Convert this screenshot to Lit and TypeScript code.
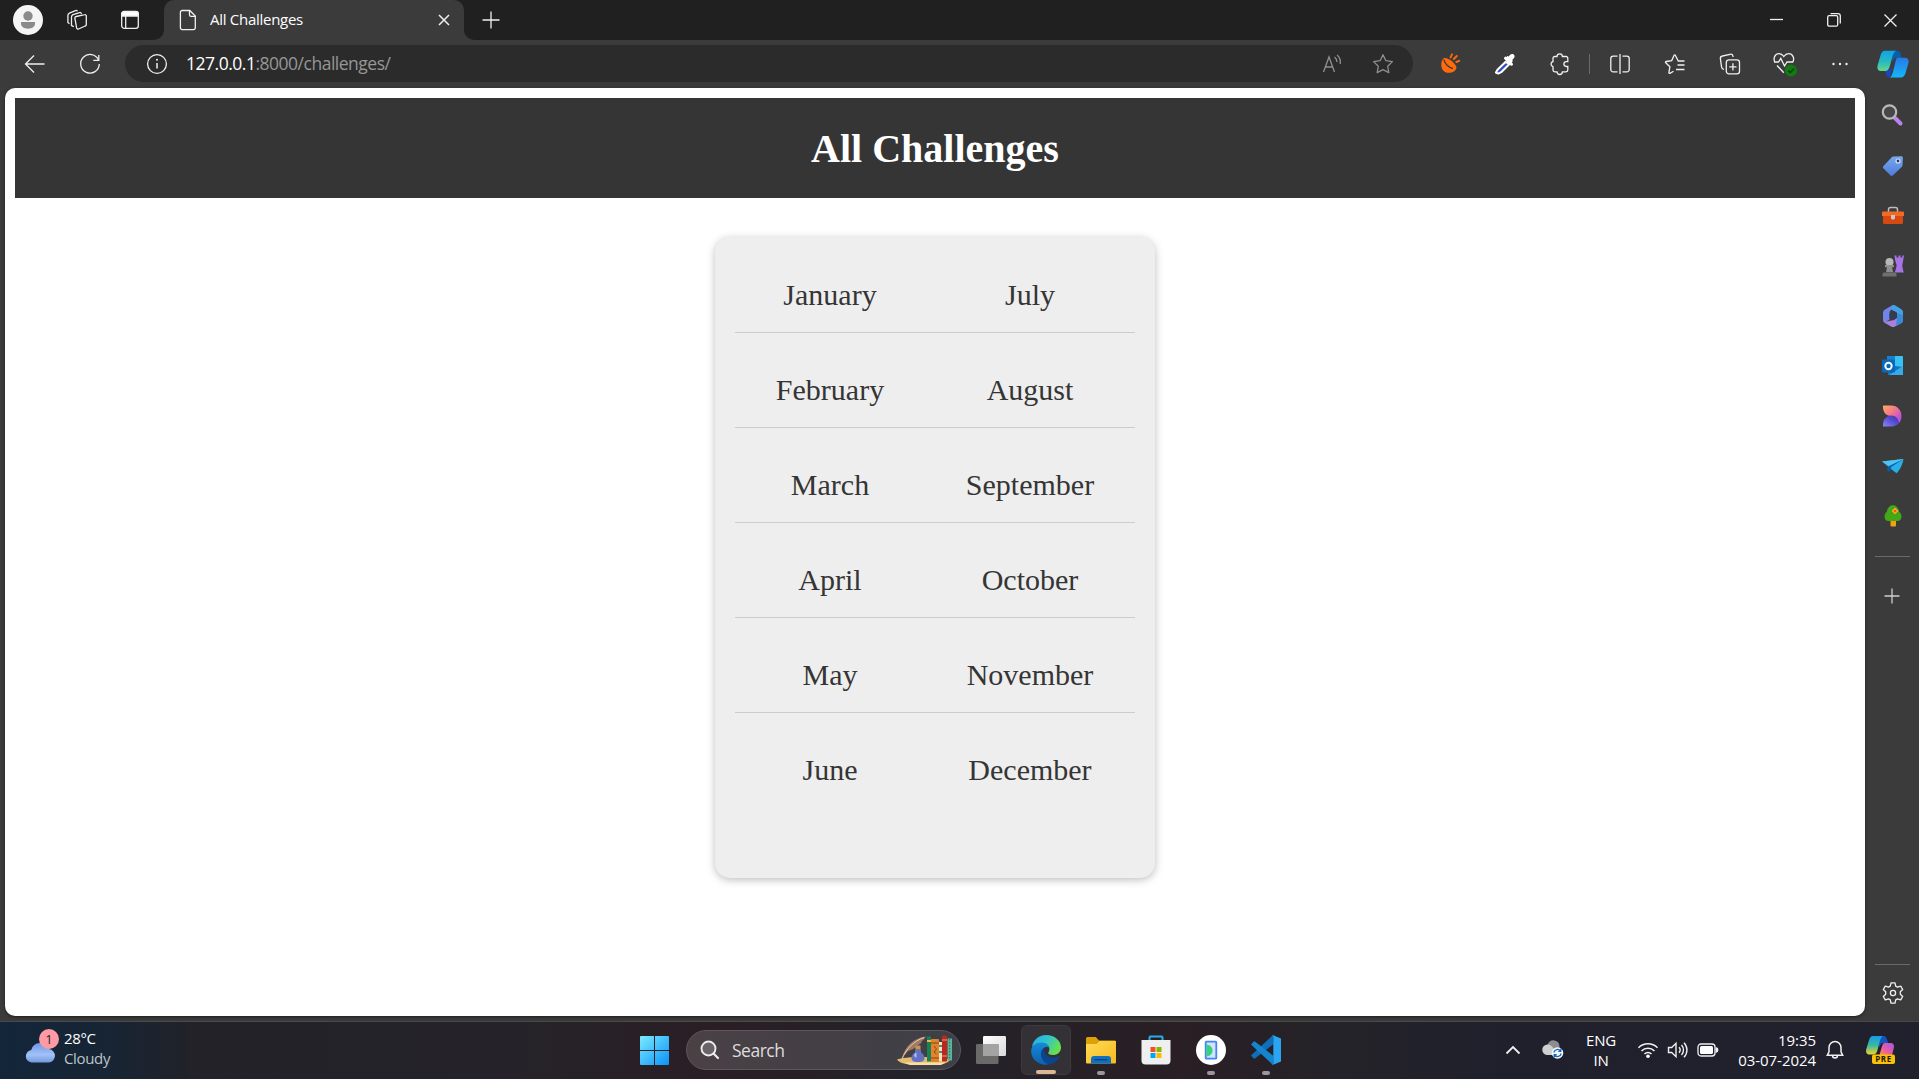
import { LitElement, html, css, svg } from "lit";
import { customElement } from "lit/decorators.js";

const icon = (w: number, h: number, body: unknown, cls = "line") =>
  html`<svg class=${cls} width=${w} height=${h} viewBox="0 0 ${w} ${h}" aria-hidden="true">${body}</svg>`;

/* ---- window chrome ---- */
const avatar = icon(30, 30, svg`<circle cx="15" cy="15" r="15" fill="#f5f5f5"/><circle cx="15" cy="11" r="4.7" fill="#8a8a8a"/><path d="M8 17h14v1.5c0 3.2-3 5.2-7 5.2s-7-2-7-5.2z" fill="#8a8a8a"/>`, "fill");
const workspaces = icon(22, 22, svg`<path d="M10.2 7.5l8.5-1.8a1.3 1.3 0 0 1 1.6 1.3v8.5a1.5 1.5 0 0 1-1.2 1.5l-6.500 3a1.500 1.500 0 0 1-2-1.100L8.900 9.300a1.500 1.500 0 0 1 1.300-1.800z"/><path d="M7.800 17.700l-2.300-1.200V8a2.500 2.500 0 0 1 1.500-2.300L13.500 3.600a1.500 1.500 0 0 1 2 1.200"/><path d="M3.500 14.700l-1.600-1.300V6.400a2.500 2.500 0 0 1 1.500-2.300l6-2.500a1.500 1.500 0 0 1 2 .700"/>`);
const tabActions = icon(20, 20, svg`<rect x="1.700" y="1.700" width="16.600" height="16.600" rx="2.600"/><path d="M1.700 6V4a2.500 2.500 0 0 1 2.500-2.500h11.600A2.500 2.500 0 0 1 18.300 4v2z" fill="#fff"/><path d="M5.700 6v12"/>`);
const page = icon(18, 22, svg`<path d="M3.200 1.500h7.600l5.500 5.500v11.800a1.800 1.800 0 0 1-1.800 1.800H3.200a1.800 1.800 0 0 1-1.800-1.800V3.300a1.800 1.800 0 0 1 1.800-1.800z"/><path d="M10.500 1.700v4.100a1.600 1.600 0 0 0 1.600 1.600h4"/>`);
const closeTab = icon(12, 12, svg`<path d="M1 1l10 10M11 1L1 11" stroke-width="1.500"/>`);
const plus = icon(18, 18, svg`<path d="M9 .500v17M.500 9h17"/>`);
const minimize = icon(13, 12, svg`<path d="M0 5.500h13"/>`);
const restore = icon(14, 14, svg`<rect x=".700" y="2.700" width="10" height="10.500" rx="1.500"/><path d="M3.500.700h7.500a2.300 2.300 0 0 1 2.300 2.300v7.500"/>`);
const closeWin = icon(13, 13, svg`<path d="M.500.500l12 12M12.500.500l-12 12"/>`);

/* ---- toolbar ---- */
const back = icon(22, 20, svg`<path d="M20.500 10H1.500M10 1.500L1.500 10l8.500 8.500"/>`);
const reload = icon(22, 22, svg`<path d="M19.500 7A9.300 9.300 0 1 0 20.300 11"/><path d="M19.800 2v5.300h-5.500"/>`);
const info = icon(22, 22, svg`<circle cx="11" cy="11" r="9.400"/><path d="M11 10v5.500" stroke-width="1.500"/><circle cx="11" cy="6.800" r="1" fill="#f0f0f0" stroke="none"/>`);
const readAloud = icon(22, 20, svg`<path d="M1.500 18L7 3l5.500 15M3.500 13h7.200M12.500 3c1.600 1.200 2.400 3 2.400 5M15 1c2.600 2 3.700 5 3.300 9" />`, "line dim");
const star = icon(22, 22, svg`<path d="M11 1.800l2.900 5.900 6.500.950-4.700 4.600 1.100 6.450L11 16.650 5.200 19.700l1.100-6.450-4.700-4.600 6.500-.950z" stroke-linejoin="round"/>`, "line dim");
const carrot = icon(22, 24, svg`<path d="M5 6C2 8.500 1.300 14 3.800 18c2 3 6.200 3.300 9.400 2.300 2.600-.800 4.300-3 4.300-5.300C16 10.800 9 5 5 6z" fill="#ff6a0b"/><path d="M5 7.500c0 3.500 4.500 8.300 9 9" stroke="#3b3b3b" stroke-width="1.300" fill="none"/><path d="M11.600 5.300L13 2.300M14.800 7l3-3M17.300 10l3-1.200" stroke="#ff6a0b" stroke-width="1.900" stroke-linecap="round" fill="none"/>`, "fill");
const dropper = icon(22, 24, svg`<path d="M11.700 9.800L3.500 17.800 1.900 20.600l2.400 1 2.900-1.400 8-8z" fill="#3250c4" stroke="#fff" stroke-width="2" stroke-linejoin="round"/><path d="M11.500 6.200l6 6" stroke="#fff" stroke-width="3" stroke-linecap="round"/><path d="M11.800 5.500L13.500 4l1.200.500 1.500-1.800c2.500-2.300 5.800.700 3.800 3.400L18.300 8l.500 1.300-1.600 1.600z" fill="#fff"/>`, "fill");
const puzzle = icon(22, 24, svg`<path d="M8 4.500a2.700 2.700 0 0 1 5.400 0H17a1.800 1.800 0 0 1 1.800 1.800v3.400h-1.500a2.400 2.400 0 0 0 0 4.800h1.500V18a1.800 1.800 0 0 1-1.800 1.800h-3.600a2.700 2.700 0 0 1-5.400 0H5.800A1.800 1.800 0 0 1 4 18v-3.300a2.700 2.700 0 0 1 0-5.200V6.300a1.800 1.800 0 0 1 1.800-1.800z"/>`);
const split = icon(22, 22, svg`<path d="M8.500 3.200H4.200a2.400 2.400 0 0 0-2.400 2.400v10.800a2.400 2.400 0 0 0 2.400 2.400h4.300M13.500 3.200h4.300a2.400 2.400 0 0 1 2.400 2.400v10.800a2.400 2.400 0 0 1-2.400 2.400h-4.300M11 1v20"/>`);
const favorites = icon(22, 22, svg`<path d="M20.500 8h-6.200L11.300 2.200a.700.700 0 0 0-1.200 0L7.700 7.600l-5.600.900a.700.700 0 0 0-.400 1.200L5.900 13.700l-1 5.900a.700.700 0 0 0 1 .700l3.600-2M13.500 12h7M12 16.500h8.500"/>`);
const collections = icon(22, 24, svg`<rect x="7.300" y="7.800" width="13.200" height="14" rx="2.600"/><path d="M13.900 11.200v7.200M10.300 14.800h7.200M5 17.300l-.700-.200a2.500 2.500 0 0 1-1.700-2L1.400 6.800A2.500 2.500 0 0 1 3.500 4l7.500-1.700a2.500 2.500 0 0 1 3 1.800l.200.900"/>`);
const essentials = icon(26, 26, svg`<path d="M2.700 11C1 7 3 2.700 7 2.700c2.200 0 3.600 1.100 4.800 2.800C13 3.800 14.500 2.700 16.700 2.700c4 0 6 4.300 4.300 8.300M5 14.500l6.800 7.300M2 11h4.500l2.300-3.600 3.700 7.600L15 11h6"/><circle cx="19" cy="19.500" r="6" fill="#107c10" stroke="none"/><path d="M16.300 19.500l2 2 3.600-3.800" stroke="#12301a" stroke-width="1.300"/>`);
const dots = icon(18, 6, svg`<circle cx="2.500" cy="3" r="1.200"/><circle cx="9" cy="3" r="1.200"/><circle cx="15.500" cy="3" r="1.200"/>`, "white");
const copilot = icon(32, 28, svg`
  <defs><linearGradient id="ca" x1="0" y1="0" x2="0" y2="1"><stop offset="0" stop-color="#0ea5e8"/><stop offset=".55" stop-color="#29b9c0"/><stop offset="1" stop-color="#63d88c"/></linearGradient>
  <linearGradient id="cb" x1="0" y1="0" x2="0" y2="1"><stop offset="0" stop-color="#2878e6"/><stop offset="1" stop-color="#13b8fb"/></linearGradient></defs>
  <path d="M14 .800h6c3 0 3.300 2 4.200 5l.800 2.200h-5c-3 0-3.600 2-4.400 5z" fill="#0b5ca8"/>
  <path d="M8 20.500h4c2-.500 3-4 4-7.500l-3 14.300c-3 .300-3.500-1.500-5-6.800z" fill="#1548c8"/>
  <path d="M8 .800h11c-2.200 1-3.200 4.200-4.200 8l-2 7.500c-.900 3.200-2 4.700-4.800 4.700H4c-3.300 0-4.200-2.800-3.300-6L3.500 5.400C4.300 2.500 5.500.800 8 .800z" fill="url(#ca)"/>
  <path d="M21 7.800h7c3.200 0 4.200 2.500 3.400 5.500l-2.800 9.500c-.900 3.200-2.300 4.700-5 4.700H12.500c2.200-.600 2.900-3.600 3.800-7l1.900-7.700c.800-3 .900-5 2.800-5z" fill="url(#cb)"/>`, "fill");

/* ---- sidebar ---- */
const sbSearch = icon(24, 24, svg`<path d="M15 15l5.500 5.500" stroke="#b884ec" stroke-width="4" stroke-linecap="round"/><circle cx="9.500" cy="9" r="6.700" fill="#47474b" stroke="#b9b9b9" stroke-width="2.200"/>`, "fill");
const sbTag = icon(24, 24, svg`<defs><linearGradient id="tg" x1="0" y1="0" x2="0" y2="1"><stop offset="0" stop-color="#77a7f0"/><stop offset="1" stop-color="#4e7ddb"/></linearGradient></defs><path d="M12.500 2.500l7.500-.300c1.300 0 1.900.600 1.900 1.900l-.300 6.900c0 .800-.300 1.400-.900 2L12 21.300c-.900.900-1.800.9-2.700 0L2.500 14.500c-.800-.800-.8-1.700 0-2.500l8-8.600c.600-.600 1.200-.900 2-.9z" fill="url(#tg)"/><circle cx="17" cy="7" r="2" fill="#323846" stroke="#d8e4f8" stroke-width="1.200"/>`, "fill");
const sbTools = icon(24, 24, svg`<path d="M7.500 8V5.500a2 2 0 0 1 2-2h5a2 2 0 0 1 2 2V8" fill="none" stroke="#bdbdbd" stroke-width="1.500"/><rect x="2" y="9" width="20" height="11" rx="1.500" fill="#d64a12"/><path d="M2 7.500h20a1 1 0 0 1 1 1v3.500H1V8.500a1 1 0 0 1 1-1z" fill="#f26a24"/><path d="M10 11h4v3.500l-2 1.500-2-1.500z" fill="#c9c9c9"/>`, "fill");
const sbGames = icon(24, 24, svg`<path d="M13.500 1.500h2v2h2v-2h2v2h1.800v-2h1.700l-1 6-.800 4 .800 4 .700 3h-9l1-3 1-4-1.500-5z" fill="#a873e8"/><circle cx="8.500" cy="8" r="4" fill="#b8b8b8"/><path d="M4 11h9v2.200h-2l1.200 5H5l1-5H4z" fill="#8f8f8f"/><path d="M3 18.500h11c1.200 0 1.500 1 1.500 2v2H1.500v-2c0-1 .300-2 1.500-2z" fill="#6f6f6f"/>`, "fill");
const sb365 = icon(24, 24, svg`<path d="M11 1.500L4 5.500C2.500 6.400 2 7.500 2 9v6.500c0 2 1.500 3 3 2.200l3.500-2V9c0-1.500.500-2.500 1.800-3.300L14.500 3C13.800 1.500 12.500.800 11 1.500z" fill="#7284e8"/><path d="M10.500 5.700L14.500 3l5.500 3c1.500.800 2 2 2 3.500v6.200L16 12.500V9.500c0-1-.500-1.500-1.300-2z" fill="#3fb3ee"/><path d="M11 1.500c1-.600 2.200-.6 3.300 0L20 5c1.500 1 2 2 2 3.500v3l-5.500-3-6-3z" fill="#41a0e6"/><path d="M22 11v5c0 1.500-.600 2.500-1.800 3.200L14 22.500c-1.500.700-2.500.700-4 0L4 19c-1-.600-1.700-1.500-2-2.500l3.500 1 7.500-1.500 3-2.500V9z" fill="#a881dc"/><path d="M22 11v5c0 1.500-.6 2.500-1.800 3.200L15 22l1-8.500V9z" fill="#358bd9"/><path d="M12 8l4 2v4l-4 2.300L8.500 14v-4z" fill="#333c52"/>`, "fill");
const sbOutlook = icon(24, 24, svg`<rect x="6" y="2" width="16" height="12" rx="1" fill="#36c3f4"/><path d="M6 2h8v6H6z" fill="#1681d0"/><path d="M7 11l15 2v7a1 1 0 0 1-1 1H7z" fill="#1276c4"/><path d="M22 12v9H8z" fill="#35abe7"/><rect x="1" y="5.500" width="13" height="13" rx="1.300" fill="#0a68ba"/><circle cx="7.500" cy="12" r="3.200" fill="none" stroke="#fff" stroke-width="1.900"/>`, "fill");
const sbDesigner = icon(24, 24, svg`<defs><linearGradient id="da" x1="0" y1="0" x2="1" y2="1"><stop offset="0" stop-color="#ffad5c"/><stop offset=".45" stop-color="#f2748c"/><stop offset=".8" stop-color="#bd4fda"/></linearGradient><linearGradient id="db" x1="0" y1="1" x2="1" y2="0"><stop offset="0" stop-color="#8a86f8"/><stop offset=".6" stop-color="#5148cb"/><stop offset="1" stop-color="#4238a5"/></linearGradient></defs><path d="M2.500 1.500H10c6.500 0 10.500 5 10.500 10.500 0 3-1 5.500-3 7.500-1-5-4-7.500-7.500-7.500-5 0-8-4-8-9 0-1 0-1.500.5-1.500z" fill="url(#da)"/><path d="M2 22.200V20.500c0-5 3.500-9 8.500-9 4 0 7 3 7.500 7.500-2 2.200-4.500 3.400-8 3.400H2z" fill="url(#db)"/>`, "fill");
const sbDrop = icon(24, 24, svg`<path d="M1 7.500L22.500 5c-.800 5-3 10.500-6.800 14.200l-5.200-3.700z" fill="#2aaeea"/><path d="M1 7.500L22.500 5 9 12.500z" fill="#50c2f3"/><path d="M22.500 5L8 12l-2 2.500 1 3.500 3.500-2.500-.800-2.300z" fill="#0b5da0"/>`, "fill");
const sbTree = icon(24, 24, svg`<path d="M9.500 15h5.500v6.500a1 1 0 0 1-1 1h-3.500a1 1 0 0 1-1-1z" fill="#f2a20d"/><path d="M12 1.200c3.800 0 5.700 3.200 6.300 6.800 3.200 2 3 8.800-1.300 9H7c-4.300-.2-4.500-7-1.300-9C6.300 4.400 8.200 1.200 12 1.200z" fill="#44a718"/><path d="M14 4l3 3-3 3-3-3z" fill="#f5a623" stroke="#f5a623" stroke-linejoin="round"/><circle cx="14" cy="7" r="1.300" fill="#ef5a1c"/>`, "fill");
const sbPlus = icon(16, 16, svg`<path d="M8 .500v15M.500 8h15" stroke="#cfcfcf"/>`);
const gear = icon(24, 24, svg`<circle cx="12" cy="12" r="2.600"/><path d="M10 1.800h4l.700 3.300 1.800 1 3.200-1 2 3.400-2.400 2.300v2.400l2.400 2.300-2 3.400-3.200-1-1.800 1-.700 3.300h-4l-.700-3.300-1.800-1-3.200 1-2-3.400 2.400-2.300v-2.400L2.300 8.500l2-3.400 3.200 1 1.800-1z" stroke-linejoin="round"/>`);

/* ---- taskbar ---- */
const weather = icon(34, 34, svg`<defs><linearGradient id="cl" x1="0" y1="0" x2="0" y2="1"><stop offset="0" stop-color="#6c97e4"/><stop offset=".6" stop-color="#a3c1f8"/><stop offset="1" stop-color="#7399dc"/></linearGradient></defs><path d="M7.500 31.500a6.300 6.300 0 0 1-.300-12.500 9.500 9.500 0 0 1 18-1 6.800 6.800 0 0 1-.500 13.500z" fill="url(#cl)"/>`, "fill");
const start = icon(29, 29, svg`<defs><linearGradient id="st" gradientUnits="userSpaceOnUse" x1="0" y1="0" x2="29" y2="29"><stop offset="0" stop-color="#7bebff"/><stop offset="1" stop-color="#0a92f8"/></linearGradient></defs><path d="M1 0h13v14H0V1a1 1 0 0 1 1-1zM15 0h13a1 1 0 0 1 1 1v13H15zM0 15h14v14H1a1 1 0 0 1-1-1zM15 15h14v13a1 1 0 0 1-1 1H15z" fill="url(#st)"/>`, "fill");
const lens = icon(20, 20, svg`<circle cx="8.500" cy="8.500" r="7" fill="#6a6468" stroke="#ececec" stroke-width="1.900"/><path d="M13.500 13.500l4.500 4.500" stroke="#ececec" stroke-width="2.200" stroke-linecap="round"/>`, "fill");
const books = icon(57, 32, svg`
  <path d="M1 25.500c8-3.500 40-3.500 53 0-1.500 3-5 4-10 5H14c-8-.5-11-2.500-13-5z" fill="#e7bb6d"/><path d="M8 28.500h42l-5 2.500H14z" fill="#f8dfa5"/>
  <path d="M31 2.500h4v25h-4z" fill="#178158"/><path d="M31 6h4v2h-4z" fill="#e8ba4c"/>
  <rect x="35" y="5" width="8" height="23" rx="1" fill="#e18327"/><path d="M35 9h8M35 24h8" stroke="#8d431c"/><path d="M38 12l2.500 3-2.500 3 2.500 2" stroke="#8d431c" fill="none"/>
  <rect x="43" y="8" width="3" height="19" fill="#eee4c5"/><path d="M43 12h3M43 18h3" stroke="#508a74" stroke-width="2"/>
  <rect x="46" y="1.500" width="5" height="26" rx="1" fill="#bc261f"/><path d="M46 6h5M46 22h5" stroke="#e8a15c"/>
  <rect x="51.500" y="4.500" width="4.500" height="22" fill="#5fb397"/><path d="M53.700 5v21" stroke="#2d6e63" stroke-dasharray="1.500 1.500"/>
  <path d="M6 24C9 12 18 4 30 2.500c-2 3-3 4-5 5l1 .500c-2 2.500-4 3-6 4l1 .500c-3 2.500-6 3.500-9 4.500" fill="#a07a60"/><path d="M6 25C10 15 18 7 28 3.500" stroke="#e6cfb5" stroke-width="1" fill="none"/>
  <path d="M19 15.500h6v3c2 1 3.500 3 3.500 5.500 0 3-2 4-6.500 4s-6.500-1-6.500-4c0-2.500 1.500-4.500 3.500-5.500z" fill="#6471c2"/><path d="M18 22c0-2 1-3 2.500-3.500V24z" fill="#b3bcf0"/><rect x="19.500" y="11.500" width="5" height="4" fill="#c69553"/>`, "fill");
const taskView = icon(30, 28, svg`<defs><linearGradient id="tv" x1="0" y1="0" x2="1" y2="1"><stop offset="0" stop-color="#fff"/><stop offset="1" stop-color="#d9d9d9"/></linearGradient></defs><rect x="7" y="0" width="23" height="20" rx="1.200" fill="url(#tv)"/><rect x="0" y="8" width="22.500" height="20" rx="1.200" fill="#6a6a6a"/><path d="M7 8h15.500v12H7z" fill="#a3a3a3"/>`, "fill");
const edge = icon(30, 30, svg`<defs><linearGradient id="ea" x1="0" y1="0" x2="1" y2=".5"><stop offset="0" stop-color="#27a9e8"/><stop offset=".5" stop-color="#30c3cf"/><stop offset="1" stop-color="#67e04d"/></linearGradient><linearGradient id="eb" x1="0" y1="0" x2="0" y2="1"><stop offset="0" stop-color="#158bd8"/><stop offset="1" stop-color="#0d5fae"/></linearGradient></defs>
  <path d="M1 12C2 5 7.500 0 15 0c8.500 0 15 5.500 15 12.500 0 5-4 7.500-8 7.500-3 0-4.800-1-4.800-2 0-.8 1.200-1.500 1.200-4 0-3-3-6-7.500-6C6.500 8 3 10 1 12z" fill="url(#ea)"/>
  <path d="M.200 15.500C.500 10.500 5 7.500 10.500 7.500c5 0 8 3 8 6 0-1.500-4-2.500-6 0-3.500 4.500-1 12 6.500 14.500-1.500 1-3 1.700-4.500 1.900C7 29.800-.300 24 .200 15.500z" fill="url(#eb)"/>
  <path d="M12 13.500c-4 3.500-2.500 13 5.500 15.900C22.500 29 26.500 26 28.500 22c.300-.700-.200-1-.800-.700-6 2.700-12.500.700-14.200-4.300-.400-1.200-.300-2.500.3-3.500z" fill="#0b4590"/>`, "fill");
const folder = icon(30, 27, svg`<defs><linearGradient id="fo" x1="0" y1="0" x2="1" y2="1"><stop offset="0" stop-color="#ffdb57"/><stop offset="1" stop-color="#f6b91d"/></linearGradient></defs><path d="M0 1.500A1.500 1.500 0 0 1 1.500 0h8.300L13 3.500h15.500A1.500 1.500 0 0 1 30 5v5H0z" fill="#dda006"/><path d="M0 7h10.500l3-3H30v21.500a1 1 0 0 1-1 1H1a1 1 0 0 1-1-1z" fill="url(#fo)"/><path d="M5 26.500V22a3 3 0 0 1 3-3h14a3 3 0 0 1 3 3v4.500z" fill="#0f70c2"/><path d="M8.500 22.700h13" stroke="#0a4380" stroke-width="1.400"/>`, "fill");
const store = icon(30, 30, svg`<path d="M8.500 7V2.500a1 1 0 0 1 1-1h11a1 1 0 0 1 1 1V7" fill="none" stroke="#21b0ec" stroke-width="2"/><path d="M.500 5h29v20.500a4 4 0 0 1-4 4h-21a4 4 0 0 1-4-4z" fill="#efefef"/><path d="M9.500 12h5v5h-5z" fill="#f25022"/><path d="M15.500 12h5v5h-5z" fill="#7fba00"/><path d="M9.500 18h5v5h-5z" fill="#00a4ef"/><path d="M15.500 18h5v5h-5z" fill="#ffb900"/>`, "fill");
const phoneApp = icon(30, 30, svg`<circle cx="15" cy="15" r="15" fill="#fff"/><rect x="9.700" y="6.700" width="10.600" height="17" rx=".800" fill="#d2e3fc" stroke="#4285f4" stroke-width="1.800"/><path d="M10.500 9.500c4 .500 6 3 6 6s-2 5.500-6 6z" fill="#36d27d"/>`, "fill");
const vscode = icon(30, 30, svg`<path d="M21.800.2L0 20.500l2.500 2.700c.6.400 1.200.4 1.800 0L22.500 9z" fill="#0e70ba"/><path d="M21.800 29.800L0 9.500l2.500-2.700c.6-.4 1.200-.4 1.800 0L22.500 21z" fill="#1485cf"/><path d="M21.500 0L30 3.500v23L21.500 30c-.8 0 .8-1 .8-2V2c0-1-1.600-2-.8-2z" fill="#2aa5f2"/>`, "fill");
const chevron = icon(16, 10, svg`<path d="M1.500 8.500L8 2l6.500 6.500" stroke-width="1.800"/>`);
const cloudSync = icon(22, 20, svg`<path d="M7 13a5 5 0 0 1-1-9 6 6 0 0 1 11.500 2V13z" fill="#8d8d8f"/><path d="M5.500 15a5 5 0 0 1 0-10.500C9 4.500 10.500 7 12 9v6z" fill="#cfcfcf"/><circle cx="15.500" cy="13" r="5.800" fill="#f3f8fd"/><path d="M11.800 12.500a3.800 3.800 0 0 1 6.800-1.500M19.200 13.500a3.800 3.800 0 0 1-6.800 1.500M18.800 8.800v2.500h-2.500M12.200 17.200v-2.500h2.500" stroke="#1668b8" stroke-width="1.300" fill="none"/>`, "fill");
const wifi = icon(22, 18, svg`<path d="M1.500 6.700a13.400 13.400 0 0 1 19 0M4.500 10a9.200 9.200 0 0 1 13 0M7.500 13a5 5 0 0 1 7 0" stroke-width="1.600"/><circle cx="11" cy="15.300" r="1.800" fill="#fff" stroke="none"/>`);
const sound = icon(22, 18, svg`<path d="M1.500 6.500h3.200L9 2.300v13.400l-4.300-4.200H1.500zM12 6.300a4 4 0 0 1 0 5.400M14.500 4a7.300 7.300 0 0 1 0 10M17 1.800a10.300 10.300 0 0 1 0 14.400" stroke-width="1.400"/>`);
const battery = icon(22, 14, svg`<rect x="1" y="1" width="17" height="12" rx="3"/><rect x="3" y="3" width="13" height="8" rx="1.500" fill="#fff" stroke="none"/><path d="M19.300 5c1 .2 1.500.8 1.500 2s-.5 1.800-1.500 2z" fill="#fff"/>`);
const bell = icon(18, 20, svg`<path d="M9 1.500a6 6 0 0 0-6 6v4.300l-1.700 3.500h15.400L15 11.800V7.500a6 6 0 0 0-6-6zM6.500 15.500a2.500 2.500 0 0 0 5 0" stroke-width="1.500"/>`);
const copilotPre = icon(32, 30, svg`
  <defs><linearGradient id="pa" x1="0" y1="0" x2="0" y2="1"><stop offset="0" stop-color="#169be8"/><stop offset=".5" stop-color="#39b8a0"/><stop offset="1" stop-color="#f0d52b"/></linearGradient>
  <linearGradient id="pb" x1="1" y1="0" x2="0" y2="1"><stop offset="0" stop-color="#a456ea"/><stop offset=".6" stop-color="#ea5f9c"/><stop offset="1" stop-color="#ff9448"/></linearGradient></defs>
  <path d="M13 1h5c3 0 3.500 2 4.300 4.500l.9 2.500h-4.500c-3 0-3.500 2-4.400 5z" fill="#1753c0"/>
  <path d="M8 1h10c-2 1-3 4-3.800 7.500L12.500 15c-.9 3-2 4.500-4.500 4.500H4.500c-3 0-4-2.500-3.200-5.500L4 5.300C4.800 2.500 6 1 8 1z" fill="url(#pa)"/>
  <path d="M20 8h5.500c3 0 4 2.200 3.300 5L27 20H14.500L16.500 13c.8-3 1.300-5 3.500-5z" fill="url(#pb)"/>
  <rect x="7" y="19.500" width="23" height="9.500" rx="2" fill="#fbc108"/><text x="18.500" y="27.200" text-anchor="middle" class="pre">PRE</text>`, "fill");

const firstHalf = ["January", "February", "March", "April", "May", "June"];
const secondHalf = ["July", "August", "September", "October", "November", "December"];

@customElement("app-root")
export class AppRoot extends LitElement {
  static styles = css`
    :host { display: block; }
    * { box-sizing: border-box; }
    svg { display: block; flex: none; }
    .line { fill: none; stroke: #f0f0f0; stroke-width: 1.3; }
    .dim { stroke: #8f8f8f; }
    .white { fill: #f0f0f0; }
    .screen { width: 1919px; height: 1079px; display: flex; flex-direction: column; overflow: hidden; background: #3b3b3b; font-family: "Open Sans", "Noto Sans", sans-serif; color: #fff; font-size: 15px; white-space: nowrap; }
    .cell { display: flex; align-items: center; justify-content: center; flex: none; }

    .tabs { height: 40px; flex: none; display: flex; background: #202020; }
    .profile { width: 56px; }
    .spaces { width: 42px; }
    .actions { width: 62px; padding-left: 2px; }
    .edge-l, .edge-r { width: 10px; background: #3b3b3b; flex: none; }
    .edge-l::before, .edge-r::before { content: ""; display: block; height: 40px; background: #202020; }
    .edge-l { margin-left: -6px; }
    .edge-l::before { border-bottom-right-radius: 10px; }
    .edge-r::before { border-bottom-left-radius: 10px; }
    .tab { width: 300px; flex: none; display: flex; align-items: center; background: #3b3b3b; border-radius: 10px 10px 0 0; padding: 0 14px 0 15px; }
    .tab-title { flex: 1; margin-left: 13px; padding-bottom: 2px; font-size: 15px; letter-spacing: -0.28px; }
    .new-tab { width: 34px; }
    .spacer { flex: 1; }
    .win { width: 57px; }

    .toolbar { height: 48px; flex: none; display: flex; align-items: flex-start; }
    .tool { height: 48px; width: 55px; }
    .first { width: 70px; }
    .second { width: 40px; }
    .omnibox { width: 1288px; height: 37px; margin: 5px 9px 0 15px; flex: none; border-radius: 19px; background: #2b2b2b; display: flex; align-items: center; padding: 0 19px 0 21px; }
    .url { flex: 1; margin-left: 18px; padding-bottom: 2px; font-size: 17.5px; letter-spacing: -0.49px; color: #969696; }
    .host { color: #fff; }
    .omni-icons { display: flex; gap: 28px; align-items: center; }
    .divider { width: 5px; height: 48px; display: flex; align-items: center; padding-left: 2px; }
    .divider::before { content: ""; width: 1px; height: 20px; background: #6b6b6b; }
    .pilot { width: 52px; height: 48px; }

    .body { height: 933px; flex: none; display: flex; }
    .view { margin-left: 5px; width: 1860px; height: 928px; flex: none; background: #fff; border-radius: 10px; padding: 10px; display: flex; flex-direction: column; align-items: center; font-family: "Liberation Serif", "Times New Roman", serif; box-shadow: 0 1px 3px rgba(0, 0, 0, 0.5); }
    h1 { margin: 0; width: 1840px; height: 100px; line-height: 102px; background: #353535; color: #fff; font-size: 40px; font-weight: bold; text-align: center; }
    .card { margin-top: 39px; padding: 1px 20px 70px; width: 440px; height: 641px; display: flex; background: #eeeeee; border-radius: 15px; box-shadow: 0 2px 8px rgba(0, 0, 0, 0.26); }
    ul { list-style: none; margin: 0; padding: 0; width: 200px; }
    li { height: 95px; padding: 40px 10px 0 0; line-height: 34px; font-size: 30px; text-align: center; color: #353535; border-bottom: 1px solid #cccccc; }
    li:last-child { border-bottom: 0; }

    .sidebar { width: 54px; height: 933px; padding-top: 2px; display: flex; flex-direction: column; align-items: center; }
    .app { height: 50px; width: 54px; padding: 2px 0 0 2px; }
    .plain { padding: 0; }
    .rule { width: 35px; height: 31px; display: flex; align-items: center; flex: none; }
    .rule::before { content: ""; width: 35px; height: 1px; margin-top: 2px; background: #6a6a6a; }
    .rule-low { height: 5px; }
    .settings { height: 54px; width: 54px; margin-bottom: 1px; padding-left: 1px; }

    .taskbar { flex: 1; display: flex; align-items: center; padding-bottom: 1px; border-top: 1px solid #48484b; background: linear-gradient(90deg, #13263a 0, #172534 110px, #222228 190px, #252329 520px, #2b1e25 720px, #232229 920px, #291f25 1180px, #242329 1340px, #20202d 1500px, #21212e 100%); }
    .weather { display: flex; align-items: center; padding-left: 24px; width: 627px; margin-bottom: 4px; }
    .cloud { position: relative; width: 34px; height: 46px; padding-top: 6px; }
    .badge { position: absolute; left: 15px; top: 4px; width: 20px; height: 20px; border-radius: 50%; background: #ff99a4; color: #1d1d1d; font-size: 13px; line-height: 20px; text-align: center; }
    .temp { margin-left: 6px; line-height: 20px; letter-spacing: -0.35px; }
    .muted { color: #bfc3c9; }
    .task { position: relative; width: 55px; height: 56px; }
    .start { width: 55px; margin-right: 4px; }
    .search { width: 275px; height: 40px; flex: none; border-radius: 20px; display: flex; align-items: center; padding: 0 7px 0 13px; background: linear-gradient(90deg, #4a4145, #443f45 45%, #3e4047); border: 1px solid #5b575b; margin-right: 2px; }
    .search-label { flex: 1; margin-left: 12px; font-size: 17.5px; letter-spacing: -0.5px; color: #dedcdd; }
    .active { width: 50px; height: 50px; margin: 0 2px 0 3px; background: #343136; border: 1px solid #3d3a3f; border-radius: 6px; }
    .running::after, .active::after { content: ""; position: absolute; bottom: 3px; width: 8px; height: 4px; border-radius: 2px; background: #9a979b; }
    .active::after { bottom: 0; width: 20px; background: #dcb796; }
    .tray { display: flex; align-items: center; margin-left: auto; height: 56px; }
    .lang { width: 46px; text-align: center; line-height: 20px; letter-spacing: -0.2px; margin-right: 9px; padding-bottom: 1px; }
    .clock { width: 93px; text-align: right; line-height: 20px; letter-spacing: -0.05px; padding-bottom: 1px; }
    .status { width: 30px; }
    .more { width: 30px; }
    .drive { width: 50px; }
    .notify { width: 38px; }
    .preview { width: 54px; margin-right: 11px; }
    .pre { font: bold 8px "Open Sans", sans-serif; fill: #241a00; letter-spacing: 0.5px; }
  `;

  private cells(items: unknown[], cls: string) {
    return items.map((item) => html`<div class="cell ${cls}">${item}</div>`);
  }

  private months(names: string[]) {
    return html`<ul>${names.map((name) => html`<li>${name}</li>`)}</ul>`;
  }

  render() {
    return html`<div class="screen">
      <div class="tabs">
        <div class="cell profile">${avatar}</div>
        <div class="cell spaces">${workspaces}</div>
        <div class="cell actions">${tabActions}</div>
        <div class="edge-l"></div>
        <div class="tab">${page}<span class="tab-title">All Challenges</span>${closeTab}</div>
        <div class="edge-r"></div>
        <div class="cell new-tab">${plus}</div>
        <div class="spacer"></div>
        ${this.cells([minimize, restore, closeWin], "win")}
      </div>
      <div class="toolbar">
        <div class="cell tool first">${back}</div>
        <div class="cell tool second">${reload}</div>
        <div class="omnibox">
          ${info}
          <span class="url"><span class="host">127.0.0.1</span>:8000/challenges/</span>
          <div class="omni-icons">${readAloud}${star}</div>
        </div>
        ${this.cells([carrot, dropper, puzzle], "tool")}
        <div class="divider"></div>
        ${this.cells([split, favorites, collections, essentials, dots], "tool")}
        <div class="cell pilot">${copilot}</div>
      </div>
      <div class="body">
        <main class="view">
          <h1>All Challenges</h1>
          <div class="card">${this.months(firstHalf)}${this.months(secondHalf)}</div>
        </main>
        <div class="sidebar">
          <div class="cell app plain">${sbSearch}</div>
          ${this.cells([sbTag, sbTools, sbGames, sb365, sbOutlook, sbDesigner, sbDrop, sbTree], "app")}
          <div class="rule"></div>
          <div class="cell app plain">${sbPlus}</div>
          <div class="spacer"></div>
          <div class="rule rule-low"></div>
          <div class="cell settings">${gear}</div>
        </div>
      </div>
      <div class="taskbar">
        <div class="weather">
          <div class="cloud">${weather}<span class="badge">1</span></div>
          <div class="temp"><div>28°C</div><div class="muted">Cloudy</div></div>
        </div>
        <div class="cell start">${start}</div>
        <div class="search">${lens}<span class="search-label">Search</span>${books}</div>
        <div class="cell task">${taskView}</div>
        <div class="cell task active">${edge}</div>
        <div class="cell task running">${folder}</div>
        <div class="cell task">${store}</div>
        <div class="cell task running">${phoneApp}</div>
        <div class="cell task running">${vscode}</div>
        <div class="tray">
          <div class="cell more">${chevron}</div>
          <div class="cell drive">${cloudSync}</div>
          <div class="lang"><div>ENG</div><div>IN</div></div>
          <div class="cell status">${wifi}</div>
          <div class="cell status">${sound}</div>
          <div class="cell status">${battery}</div>
          <div class="clock"><div>19:35</div><div>03-07-2024</div></div>
          <div class="cell notify">${bell}</div>
          <div class="cell preview">${copilotPre}</div>
        </div>
      </div>
    </div>`;
  }
}
